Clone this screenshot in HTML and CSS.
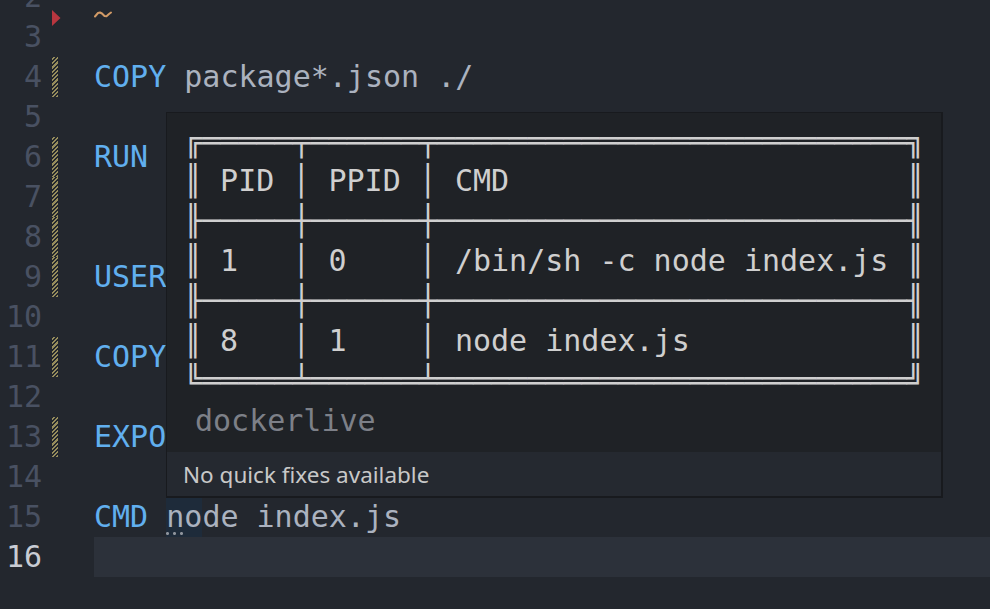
FILE: index.html
```html
<!DOCTYPE html>
<html>
<head>
<meta charset="utf-8">
<link rel="stylesheet" href="styles.css">
</head>
<body>
<div class="editor">
  <div class="line">
    <div class="ln">2</div>
    <div class="deco"><svg class="deleted" width="9" height="16" viewBox="0 0 9 16"><polygon points="0,0 8.5,8 0,16" fill="#b8363f"/></svg></div>
    <div class="code"><svg class="squiggle" width="18" height="7" viewBox="0 0 18 7"><polyline points="1,5.5 4,2 6,1.5 8,2.5 10.5,5 12.5,5.2 15,3 17,1.5" fill="none" stroke="#d19a66" stroke-width="2" stroke-linejoin="round" stroke-linecap="round"/></svg></div>
  </div>
  <div class="line"><div class="ln">3</div><div class="deco"></div><div class="code"></div></div>
  <div class="line"><div class="ln">4</div><div class="deco"><span class="mod"></span></div><div class="code"><span class="kw">COPY</span> package*.json ./</div></div>
  <div class="line"><div class="ln">5</div><div class="deco"></div><div class="code"></div></div>
  <div class="line"><div class="ln">6</div><div class="deco"><span class="mod"></span></div><div class="code"><span class="kw">RUN</span></div></div>
  <div class="line"><div class="ln">7</div><div class="deco"><span class="mod"></span></div><div class="code"></div></div>
  <div class="line"><div class="ln">8</div><div class="deco"><span class="mod"></span></div><div class="code"></div></div>
  <div class="line"><div class="ln">9</div><div class="deco"><span class="mod"></span></div><div class="code"><span class="kw">USER</span></div></div>
  <div class="line"><div class="ln">10</div><div class="deco"></div><div class="code"></div></div>
  <div class="line"><div class="ln">11</div><div class="deco"><span class="mod"></span></div><div class="code"><span class="kw">COPY</span></div></div>
  <div class="line"><div class="ln">12</div><div class="deco"></div><div class="code"></div></div>
  <div class="line"><div class="ln">13</div><div class="deco"><span class="mod"></span></div><div class="code"><span class="kw">EXPO</span></div></div>
  <div class="line"><div class="ln">14</div><div class="deco"></div><div class="code"></div></div>
  <div class="line"><div class="ln">15</div><div class="deco"></div><div class="code"><span class="kw">CMD</span> <span class="hl">no</span>de index.js</div></div>
  <div class="line current"><div class="ln">16</div><div class="deco"></div><div class="code"></div></div>
</div>

<div class="hover">
  <div class="hover-contents">
<pre class="table">╔═════╤══════╤══════════════════════════╗
║ PID │ PPID │ CMD                      ║
╟─────┼──────┼──────────────────────────╢
║ 1   │ 0    │ /bin/sh -c node index.js ║
╟─────┼──────┼──────────────────────────╢
║ 8   │ 1    │ node index.js            ║
╚═════╧══════╧══════════════════════════╝</pre>
    <div class="source">dockerlive</div>
  </div>
  <div class="status">No quick fixes available</div>
</div>
</body>
</html>
```

FILE: styles.css
```css
html, body {
  margin: 0;
  padding: 0;
}
body {
  width: 990px;
  height: 609px;
  overflow: hidden;
  background: #23272e;
  position: relative;
  font-family: "DejaVu Sans Mono", monospace;
}
.editor {
  margin-top: -23px;
  display: flex;
  flex-direction: column;
}
.line {
  display: flex;
  height: 40px;
  line-height: 40px;
  font-size: 30px;
}
.ln {
  width: 42px;
  text-align: right;
  color: #495162;
  flex: none;
}
.current .ln {
  color: #c8ccd4;
}
.deco {
  width: 52px;
  flex: none;
  position: relative;
}
.mod {
  display: block;
  margin-left: 10px;
  width: 6px;
  height: 40px;
  background: repeating-linear-gradient(-45deg, #968d5c 0 1.5px, transparent 1.5px 3px);
}
.deleted {
  position: absolute;
  left: 10px;
  top: 33px;
}
.code {
  flex: 1;
  white-space: pre;
  color: #abb2bf;
  position: relative;
}
.current .code {
  background: #2c313a;
}
.kw {
  color: #61afef;
}
.squiggle {
  position: absolute;
  left: 0;
  top: 34px;
}
.hl {
  display: inline-block;
  height: 40px;
  background: #1e2b3a;
  position: relative;
}
.hl::after {
  content: "";
  position: absolute;
  left: 0;
  bottom: 2px;
  width: 20px;
  height: 3px;
  background: radial-gradient(circle at 1.5px 1.5px, #8f949c 1.3px, transparent 1.6px) 0 0 / 7px 3px repeat-x;
}

.hover {
  position: absolute;
  left: 166px;
  top: 112px;
  width: 774px;
  height: 383px;
  background: #1f2226;
  border-style: solid;
  border-color: #181a1e;
  border-width: 1px 2px 2px 1px;
  display: flex;
  flex-direction: column;
}
.hover-contents {
  flex: 1;
  padding-top: 8px;
}
.table {
  margin: 0 0 0 17px;
  font-family: "DejaVu Sans Mono", monospace;
  font-size: 30px;
  line-height: 40px;
  color: #cfcfcf;
}
.source {
  margin: 0 0 0 28px;
  font-size: 30px;
  line-height: 40px;
  color: #7d8088;
}
.status {
  height: 44px;
  background: #252930;
  display: flex;
  align-items: center;
  padding-left: 16px;
  font-family: "Noto Sans", sans-serif;
  font-size: 22.5px;
  color: #c8c8c8;
}
```
